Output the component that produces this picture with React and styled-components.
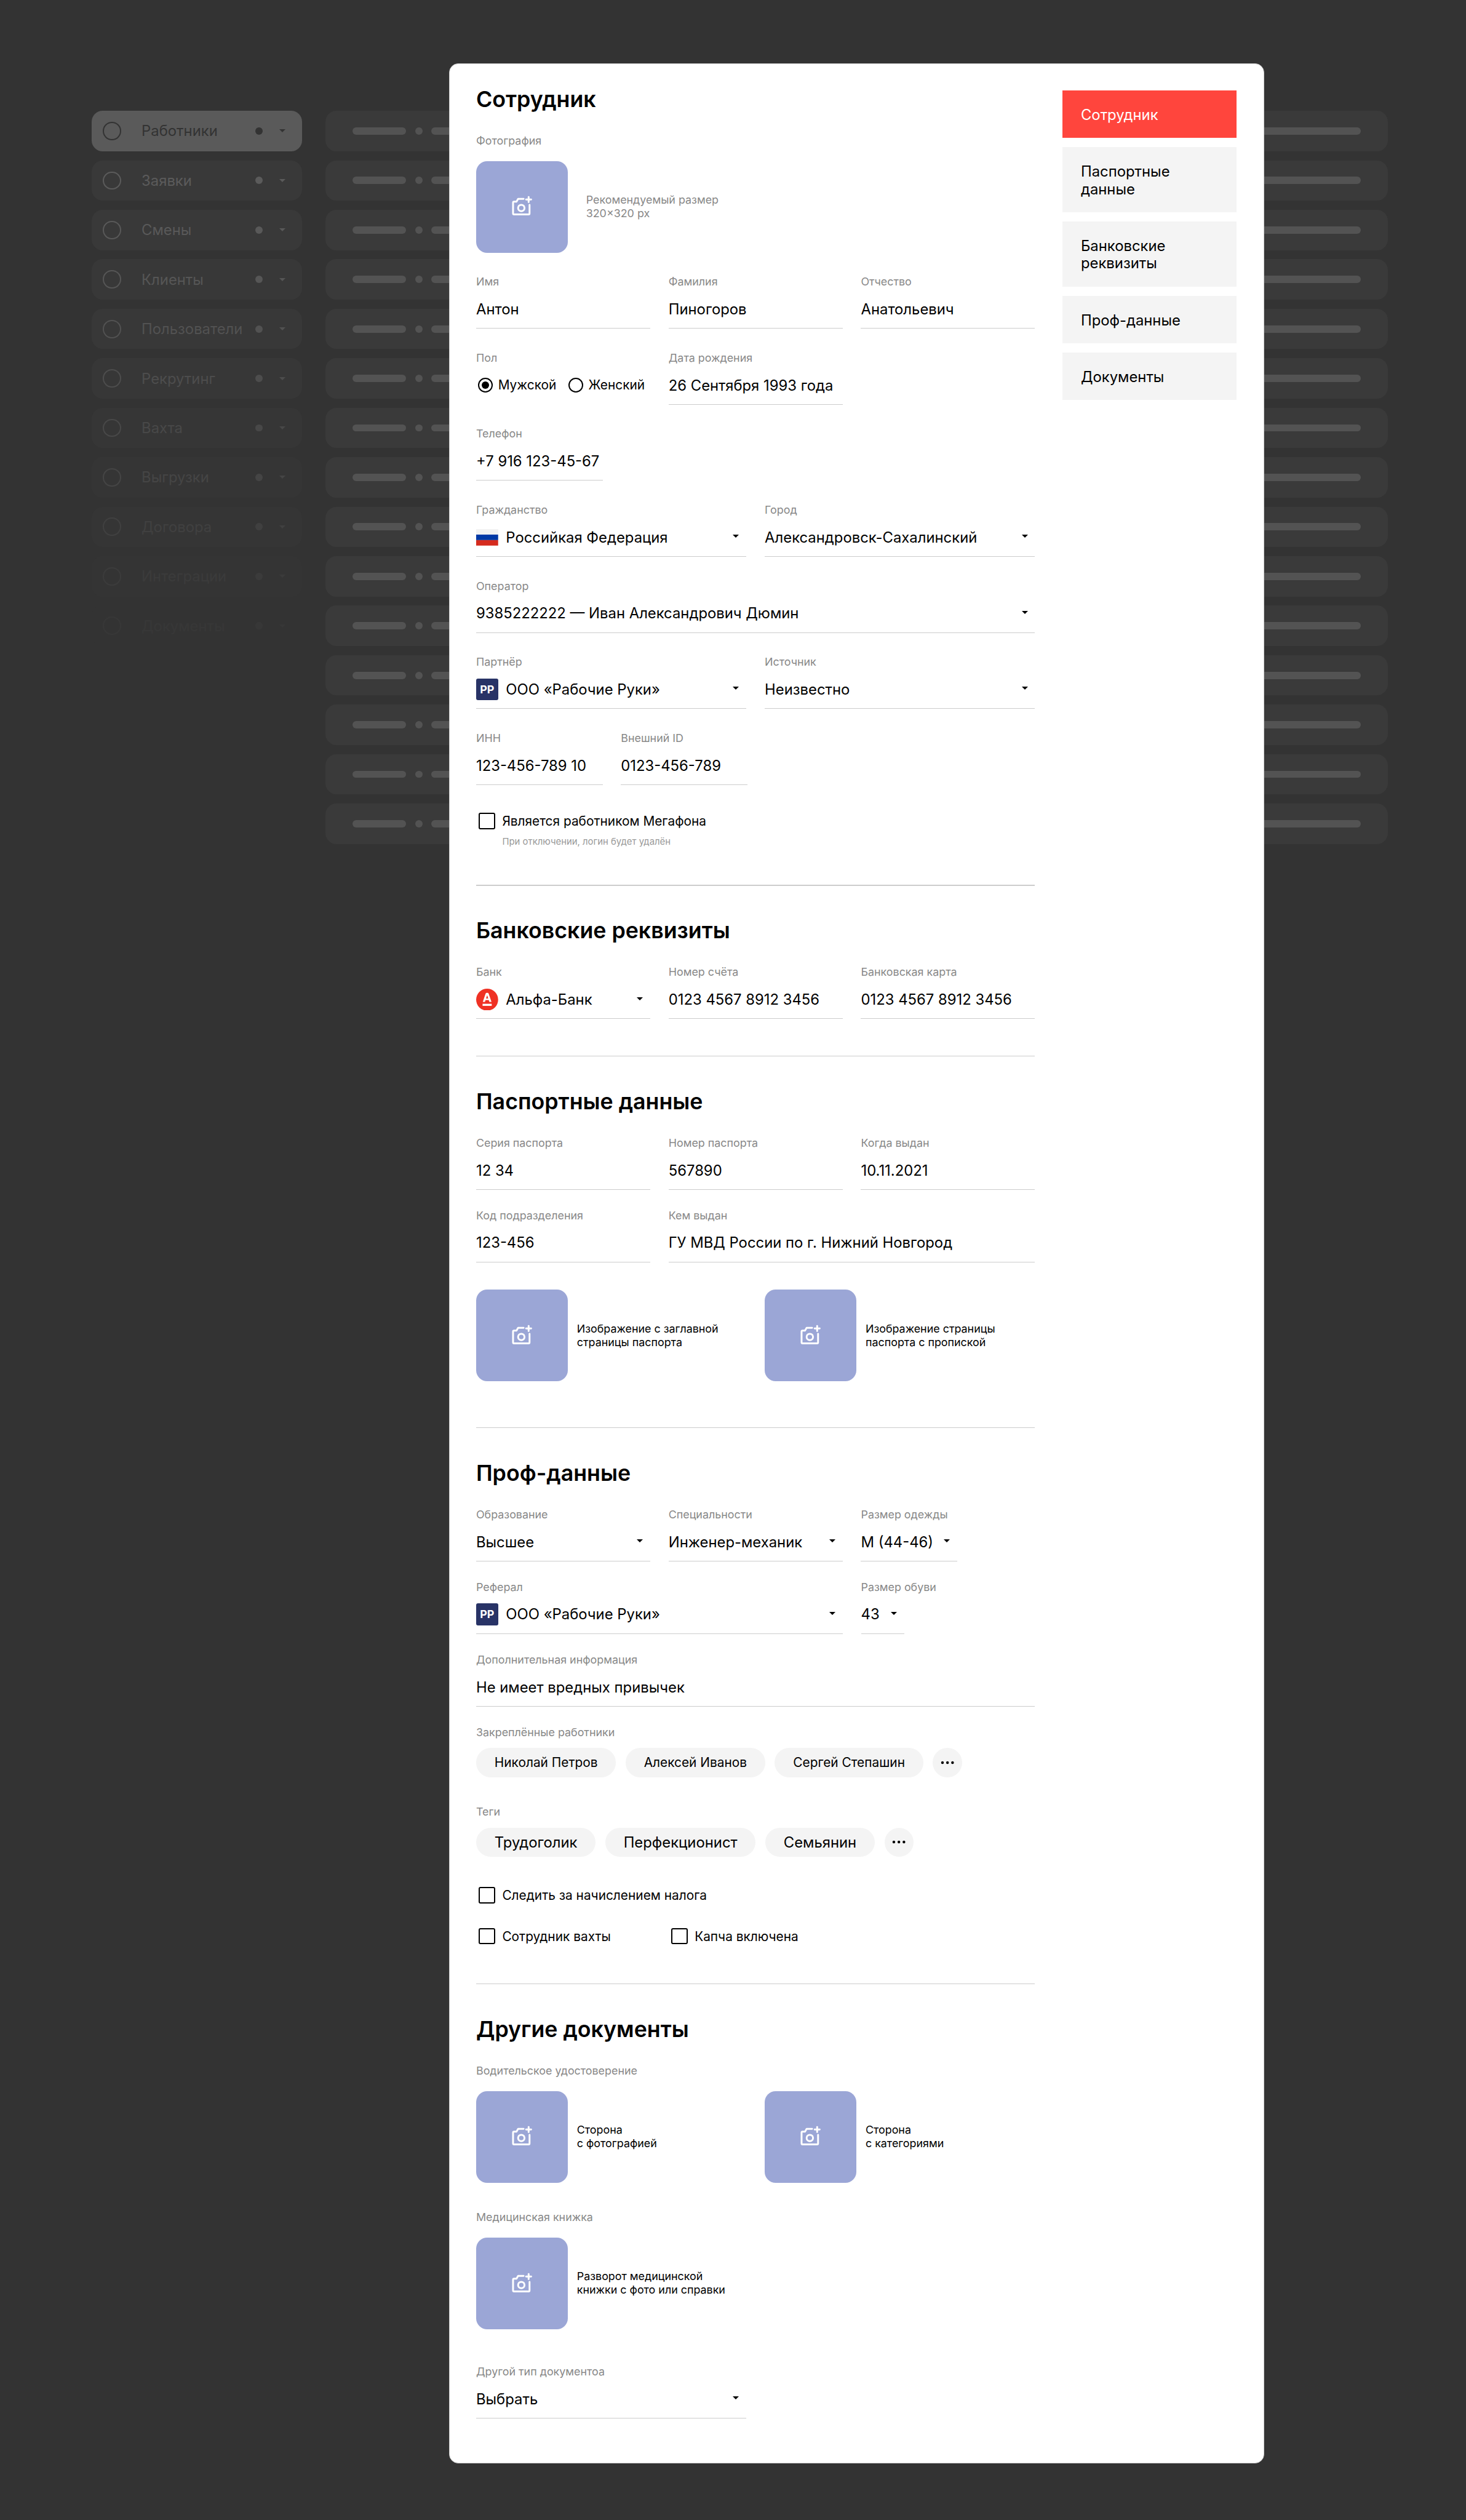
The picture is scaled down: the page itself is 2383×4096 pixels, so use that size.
import React from 'react';
import styled, { createGlobalStyle } from 'styled-components';

const GlobalStyle = createGlobalStyle`
    html, body {
        margin: 0;
        background: #333333;
        overflow: hidden;
    }
    * {
        box-sizing: border-box;
    }
`

// everything below is in reference pixels, the zoom brings it down to the window
const Page = styled.div`
    position: relative;
    zoom: 0.74469;
    width: 3200px;
    height: 5500px;
    background: #333333;
    font-family: Inter, "Noto Sans", sans-serif;
    color: #000;
    display: grid;
    grid-template-columns: 460px 2320px;
    column-gap: 50px;
    align-content: start;
    padding: 242px 0 0 200px;
`

const Column = styled.div`
    display: flex;
    flex-direction: column;
    gap: 20px;
`

const MenuRow = styled.div`
    height: 88px;
    border-radius: 24px;
    background: ${p => p.$active ? '#5a5a5a' : '#3a3a3a'};
    color: ${p => p.$active ? '#333333' : '#5e5e5e'};
    opacity: ${p => p.$fade};
    display: flex;
    align-items: center;
    padding: 0 37px 0 24px;
    font-size: 32px;
`

const MenuRing = styled.div`
    width: 40px;
    height: 40px;
    border-radius: 50%;
    border: 4px solid currentColor;
    margin-right: 45px;
`

const MenuDot = styled.div`
    width: 16px;
    height: 16px;
    border-radius: 50%;
    background: currentColor;
    margin-left: auto;
`

const MenuArrow = styled.div`
    width: 0;
    height: 0;
    margin-left: 36px;
    border-left: 7px solid transparent;
    border-right: 7px solid transparent;
    border-top: 7px solid currentColor;
`

const GhostRow = styled.div`
    height: 88px;
    border-radius: 24px;
    background: #3a3a3a;
    display: flex;
    align-items: center;
    gap: 20px;
    padding: 0 60px;
`

const GhostBar = styled.div`
    height: 16px;
    border-radius: 8px;
    background: #535353;
    width: ${p => p.$grow ? 'auto' : '116px'};
    flex: ${p => p.$grow ? 1 : 'none'};
`

const GhostDot = styled.div`
    width: 16px;
    height: 16px;
    border-radius: 50%;
    background: #535353;
`

const Modal = styled.div`
    position: absolute;
    left: 980px;
    top: 138px;
    width: 1780px;
    border: 2px solid #cccccc;
    border-radius: 20px;
    background: #fff;
    display: flex;
    align-items: flex-start;
    gap: 60px;
    padding: 0 58px 97px;
`

const Form = styled.div`
    width: 1220px;
    flex: none;
    padding-top: 47px;
`

const Nav = styled.div`
    width: 380px;
    flex: none;
    margin-top: 58px;
    display: flex;
    flex-direction: column;
    gap: 20px;
`

const NavItem = styled.div`
    padding: 35px 40px 31px;
    font-size: 32px;
    line-height: 38px;
    background: ${p => p.$active ? '#ff453d' : '#f4f4f4'};
    color: ${p => p.$active ? '#fff' : '#000'};
`

const Title = styled.h2`
    margin: 0 0 46px;
    font-size: 48px;
    line-height: 60px;
    font-weight: 600;
`

const Divider = styled.hr`
    border: 0;
    height: 2px;
    background: #cccccc;
    margin: ${p => p.$top}px 0 68px;
`

const Row = styled.div`
    display: grid;
    grid-template-columns: ${p => p.$cols || '380px 380px 380px'};
    column-gap: 40px;
    margin-top: ${p => p.$top ?? 49}px;
`

const Field = styled.div`
    grid-column: ${p => p.$span || 'auto'};
`

const Label = styled.div`
    font-size: 24px;
    line-height: 30px;
    color: #888888;
    white-space: nowrap;
`

const Value = styled.div`
    display: flex;
    align-items: center;
    height: 87px;
    padding-top: 3px;
    border-bottom: 2px solid #cccccc;
    font-size: 32px;
    white-space: nowrap;
`

const Radios = styled.div`
    display: flex;
    align-items: center;
    height: 87px;
    padding: 3px 0 2px 4px;
    gap: 26px;
`

const RadioItem = styled.div`
    display: flex;
    align-items: center;
    gap: 12px;
    font-size: 28px;
`

const RadioMark = styled.div`
    width: 32px;
    height: 32px;
    border-radius: 50%;
    border: 3px solid #000;
    display: flex;
    align-items: center;
    justify-content: center;
    &::after {
        content: '';
        width: 16px;
        height: 16px;
        border-radius: 50%;
        background: ${p => p.$on ? '#000' : 'transparent'};
    }
`

const Arrow = styled.div`
    width: 0;
    height: 0;
    margin: 0 16px 4px auto;
    border-left: 8px solid transparent;
    border-right: 8px solid transparent;
    border-top: 8px solid #000;
    flex: none;
`

const FlagIcon = styled.svg`
    width: 48px;
    height: 36px;
    margin-right: 17px;
    flex: none;
`

const PartnerLogo = styled.div`
    width: 48px;
    height: 48px;
    margin-right: 17px;
    flex: none;
    border-radius: 4px;
    background: #283366;
    color: #fff;
    font-size: 24px;
    font-weight: 700;
    display: flex;
    align-items: center;
    justify-content: center;
`

const BankIcon = styled.svg`
    width: 48px;
    height: 48px;
    margin-right: 17px;
    flex: none;
`

const CheckRow = styled.div`
    display: flex;
    align-items: center;
    gap: 15px;
    height: 36px;
    padding-left: 6px;
    font-size: 28px;
    white-space: nowrap;
`

const CheckBox = styled.div`
    width: 36px;
    height: 36px;
    flex: none;
    border: 4px solid #000;
    border-radius: 4px;
`

const Hint = styled.div`
    margin: 14px 0 0 57px;
    font-size: 20px;
    line-height: 28px;
    color: #999999;
`

const UploadRow = styled.div`
    display: grid;
    grid-template-columns: 590px 590px;
    column-gap: 40px;
    margin-top: ${p => p.$top ?? 29}px;
`

const Upload = styled.div`
    display: flex;
    align-items: center;
    gap: ${p => p.$hint ? 40 : 20}px;
`

const UploadBox = styled.div`
    width: 200px;
    height: 200px;
    flex: none;
    border-radius: 24px;
    background: #9ba6d6;
    display: flex;
    align-items: center;
    justify-content: center;
`

const UploadText = styled.div`
    font-size: 24px;
    line-height: 30px;
    color: ${p => p.$hint ? '#888888' : '#000'};
`

const Chips = styled.div`
    display: flex;
    gap: 21px;
    margin-top: 19px;
`

const Chip = styled.div`
    height: 64px;
    padding: 0 40px;
    border-radius: 32px;
    background: #f4f4f4;
    font-size: ${p => p.$big ? 32 : 28}px;
    display: flex;
    align-items: center;
    white-space: nowrap;
`

const MoreChip = styled.div`
    width: 64px;
    height: 64px;
    border-radius: 50%;
    background: #f4f4f4;
    display: flex;
    align-items: center;
    justify-content: center;
`

const Caption = styled(Label)`
    margin-top: ${p => p.$top}px;
`

function CameraIcon() {
    return (
        <svg width="48" height="48" viewBox="0 0 48 48" fill="none" stroke="#fff" strokeWidth="4" strokeLinecap="round" strokeLinejoin="round">
            <path d="M27 7H15l-3.5 6H6a2 2 0 0 0-2 2v24a2 2 0 0 0 2 2h32a2 2 0 0 0 2-2V20" />
            <circle cx="22" cy="27" r="7" />
            <path d="M38 3v11M32.500 8.500h11" />
        </svg>
    )
}

function RussianFlag() {
    return (
        <FlagIcon viewBox="0 0 48 36">
            <rect width="48" height="12" fill="#f2f2f2" />
            <rect y="12" width="48" height="12" fill="#0039a6" />
            <rect y="24" width="48" height="12" fill="#d52b1e" />
        </FlagIcon>
    )
}

function AlfaIcon() {
    return (
        <BankIcon viewBox="0 0 48 48">
            <circle cx="24" cy="24" r="24" fill="#ef3124" />
            <path fill="#fff" fillRule="evenodd" d="M20.500 11.200c.7-1.700 1.700-2.200 3.500-2.200s2.800.5 3.400 2.200L33.500 29h-4.700l-1.300-4h-7l-1.300 4h-4.700zM24 14l-2.400 7.400h4.800z" />
            <rect x="14" y="33" width="20" height="4.500" fill="#fff" />
        </BankIcon>
    )
}

function Dots() {
    return (
        <svg width="30" height="8" viewBox="0 0 30 8" fill="#000">
            <circle cx="4" cy="4" r="3" />
            <circle cx="15" cy="4" r="3" />
            <circle cx="26" cy="4" r="3" />
        </svg>
    )
}

function TextField({ label, value, span, children }) {
    return (
        <Field $span={span}>
            <Label>{label}</Label>
            <Value>{children}{value}</Value>
        </Field>
    )
}

function SelectField({ label, value, span, children }) {
    return (
        <Field $span={span}>
            <Label>{label}</Label>
            <Value>{children}{value}<Arrow /></Value>
        </Field>
    )
}

function UploadCard({ hint, lines }) {
    return (
        <Upload $hint={hint}>
            <UploadBox><CameraIcon /></UploadBox>
            <UploadText $hint={hint}>{lines[0]}<br />{lines[1]}</UploadText>
        </Upload>
    )
}

const menu = [
    ['Работники', 1], ['Заявки', 0.95], ['Смены', 0.9], ['Клиенты', 0.82],
    ['Пользователи', 0.72], ['Рекрутинг', 0.62], ['Вахта', 0.5], ['Выгрузки', 0.42],
    ['Договора', 0.32], ['Интеграции', 0.2], ['Документы', 0.1],
];

const navItems = [
    ['Сотрудник'], ['Паспортные', 'данные'], ['Банковские', 'реквизиты'], ['Проф-данные'], ['Документы'],
];

function App() {
    return (
        <Page>
            <GlobalStyle />
            <Column>
                {menu.map(([name, fade], i) => (
                    <MenuRow key={name} $active={i === 0} $fade={fade}>
                        <MenuRing />
                        {name}
                        <MenuDot />
                        <MenuArrow />
                    </MenuRow>
                ))}
            </Column>
            <Column>
                {Array.from({ length: 15 }, (_, i) => (
                    <GhostRow key={i}>
                        <GhostBar />
                        <GhostDot />
                        <GhostBar $grow />
                    </GhostRow>
                ))}
            </Column>

            <Modal>
                <Form>
                    <Title>Сотрудник</Title>
                    <Label>Фотография</Label>
                    <UploadRow>
                        <UploadCard hint lines={['Рекомендуемый размер', '320×320 px']} />
                    </UploadRow>
                    <Row>
                        <TextField label="Имя" value="Антон" />
                        <TextField label="Фамилия" value="Пиногоров" />
                        <TextField label="Отчество" value="Анатольевич" />
                    </Row>
                    <Row>
                        <Field>
                            <Label>Пол</Label>
                            <Radios>
                                <RadioItem><RadioMark $on />Мужской</RadioItem>
                                <RadioItem><RadioMark />Женский</RadioItem>
                            </Radios>
                        </Field>
                        <TextField label="Дата рождения" value="26 Сентября 1993 года" />
                    </Row>
                    <Row $cols="276px 276px">
                        <TextField label="Телефон" value="+7 916 123-45-67" />
                    </Row>
                    <Row $cols="590px 590px">
                        <SelectField label="Гражданство" value="Российкая Федерация"><RussianFlag /></SelectField>
                        <SelectField label="Город" value="Александровск-Сахалинский" />
                    </Row>
                    <Row $cols="1fr">
                        <SelectField label="Оператор" value="9385222222 — Иван Александрович Дюмин" />
                    </Row>
                    <Row $cols="590px 590px">
                        <SelectField label="Партнёр" value="ООО «Рабочие Руки»"><PartnerLogo>РР</PartnerLogo></SelectField>
                        <SelectField label="Источник" value="Неизвестно" />
                    </Row>
                    <Row $cols="276px 276px">
                        <TextField label="ИНН" value="123-456-789 10" />
                        <TextField label="Внешний ID" value="0123-456-789" />
                    </Row>
                    <Row $top={61} $cols="1fr">
                        <CheckRow><CheckBox />Является работником Мегафона</CheckRow>
                    </Row>
                    <Hint>При отключении, логин будет удалён</Hint>

                    <Divider $top={79} />
                    <Title>Банковские реквизиты</Title>
                    <Row $top={0}>
                        <SelectField label="Банк" value="Альфа-Банк"><AlfaIcon /></SelectField>
                        <TextField label="Номер счёта" value="0123 4567 8912 3456" />
                        <TextField label="Банковская карта" value="0123 4567 8912 3456" />
                    </Row>

                    <Divider $top={80} />
                    <Title>Паспортные данные</Title>
                    <Row $top={0}>
                        <TextField label="Серия паспорта" value="12 34" />
                        <TextField label="Номер паспорта" value="567890" />
                        <TextField label="Когда выдан" value="10.11.2021" />
                    </Row>
                    <Row $top={41}>
                        <TextField label="Код подразделения" value="123-456" />
                        <TextField label="Кем выдан" value="ГУ МВД России по г. Нижний Новгород" span="2 / 4" />
                    </Row>
                    <UploadRow $top={60}>
                        <UploadCard lines={['Изображение с заглавной', 'страницы паспорта']} />
                        <UploadCard lines={['Изображение страницы', 'паспорта с пропиской']} />
                    </UploadRow>

                    <Divider $top={100} />
                    <Title>Проф-данные</Title>
                    <Row $top={2} $cols="380px 380px 210px">
                        <SelectField label="Образование" value="Высшее" />
                        <SelectField label="Специальности" value="Инженер-механик" />
                        <SelectField label="Размер одежды" value="M (44-46)" />
                    </Row>
                    <Row $top={41} $cols="800px 94px">
                        <SelectField label="Реферал" value="ООО «Рабочие Руки»"><PartnerLogo>РР</PartnerLogo></SelectField>
                        <SelectField label="Размер обуви" value="43" />
                    </Row>
                    <Row $top={42} $cols="1fr">
                        <TextField label="Дополнительная информация" value="Не имеет вредных привычек" />
                    </Row>
                    <Caption $top={41}>Закреплённые работники</Caption>
                    <Chips>
                        <Chip>Николай Петров</Chip>
                        <Chip>Алексей Иванов</Chip>
                        <Chip>Сергей Степашин</Chip>
                        <MoreChip><Dots /></MoreChip>
                    </Chips>
                    <Caption $top={61}>Теги</Caption>
                    <Chips>
                        <Chip $big>Трудоголик</Chip>
                        <Chip $big>Перфекционист</Chip>
                        <Chip $big>Семьянин</Chip>
                        <MoreChip><Dots /></MoreChip>
                    </Chips>
                    <Row $top={66} $cols="1fr">
                        <CheckRow><CheckBox />Следить за начислением налога</CheckRow>
                    </Row>
                    <Row $top={53}>
                        <CheckRow><CheckBox />Сотрудник вахты</CheckRow>
                        <CheckRow><CheckBox />Капча включена</CheckRow>
                    </Row>

                    <Divider $top={85} />
                    <Title>Другие документы</Title>
                    <Label>Водительское удостоверение</Label>
                    <UploadRow>
                        <UploadCard lines={['Сторона', 'с фотографией']} />
                        <UploadCard lines={['Сторона', 'с категориями']} />
                    </UploadRow>
                    <Caption $top={61}>Медицинская книжка</Caption>
                    <UploadRow>
                        <UploadCard lines={['Разворот медицинской', 'книжки с фото или справки']} />
                    </UploadRow>
                    <Row $top={78} $cols="590px">
                        <SelectField label="Другой тип документоа" value="Выбрать" />
                    </Row>
                </Form>
                <Nav>
                    {navItems.map((lines, i) => (
                        <NavItem key={lines[0]} $active={i === 0}>
                            {lines[0]}{lines[1] && <br />}{lines[1]}
                        </NavItem>
                    ))}
                </Nav>
            </Modal>
        </Page>
    )
}

export default App;
